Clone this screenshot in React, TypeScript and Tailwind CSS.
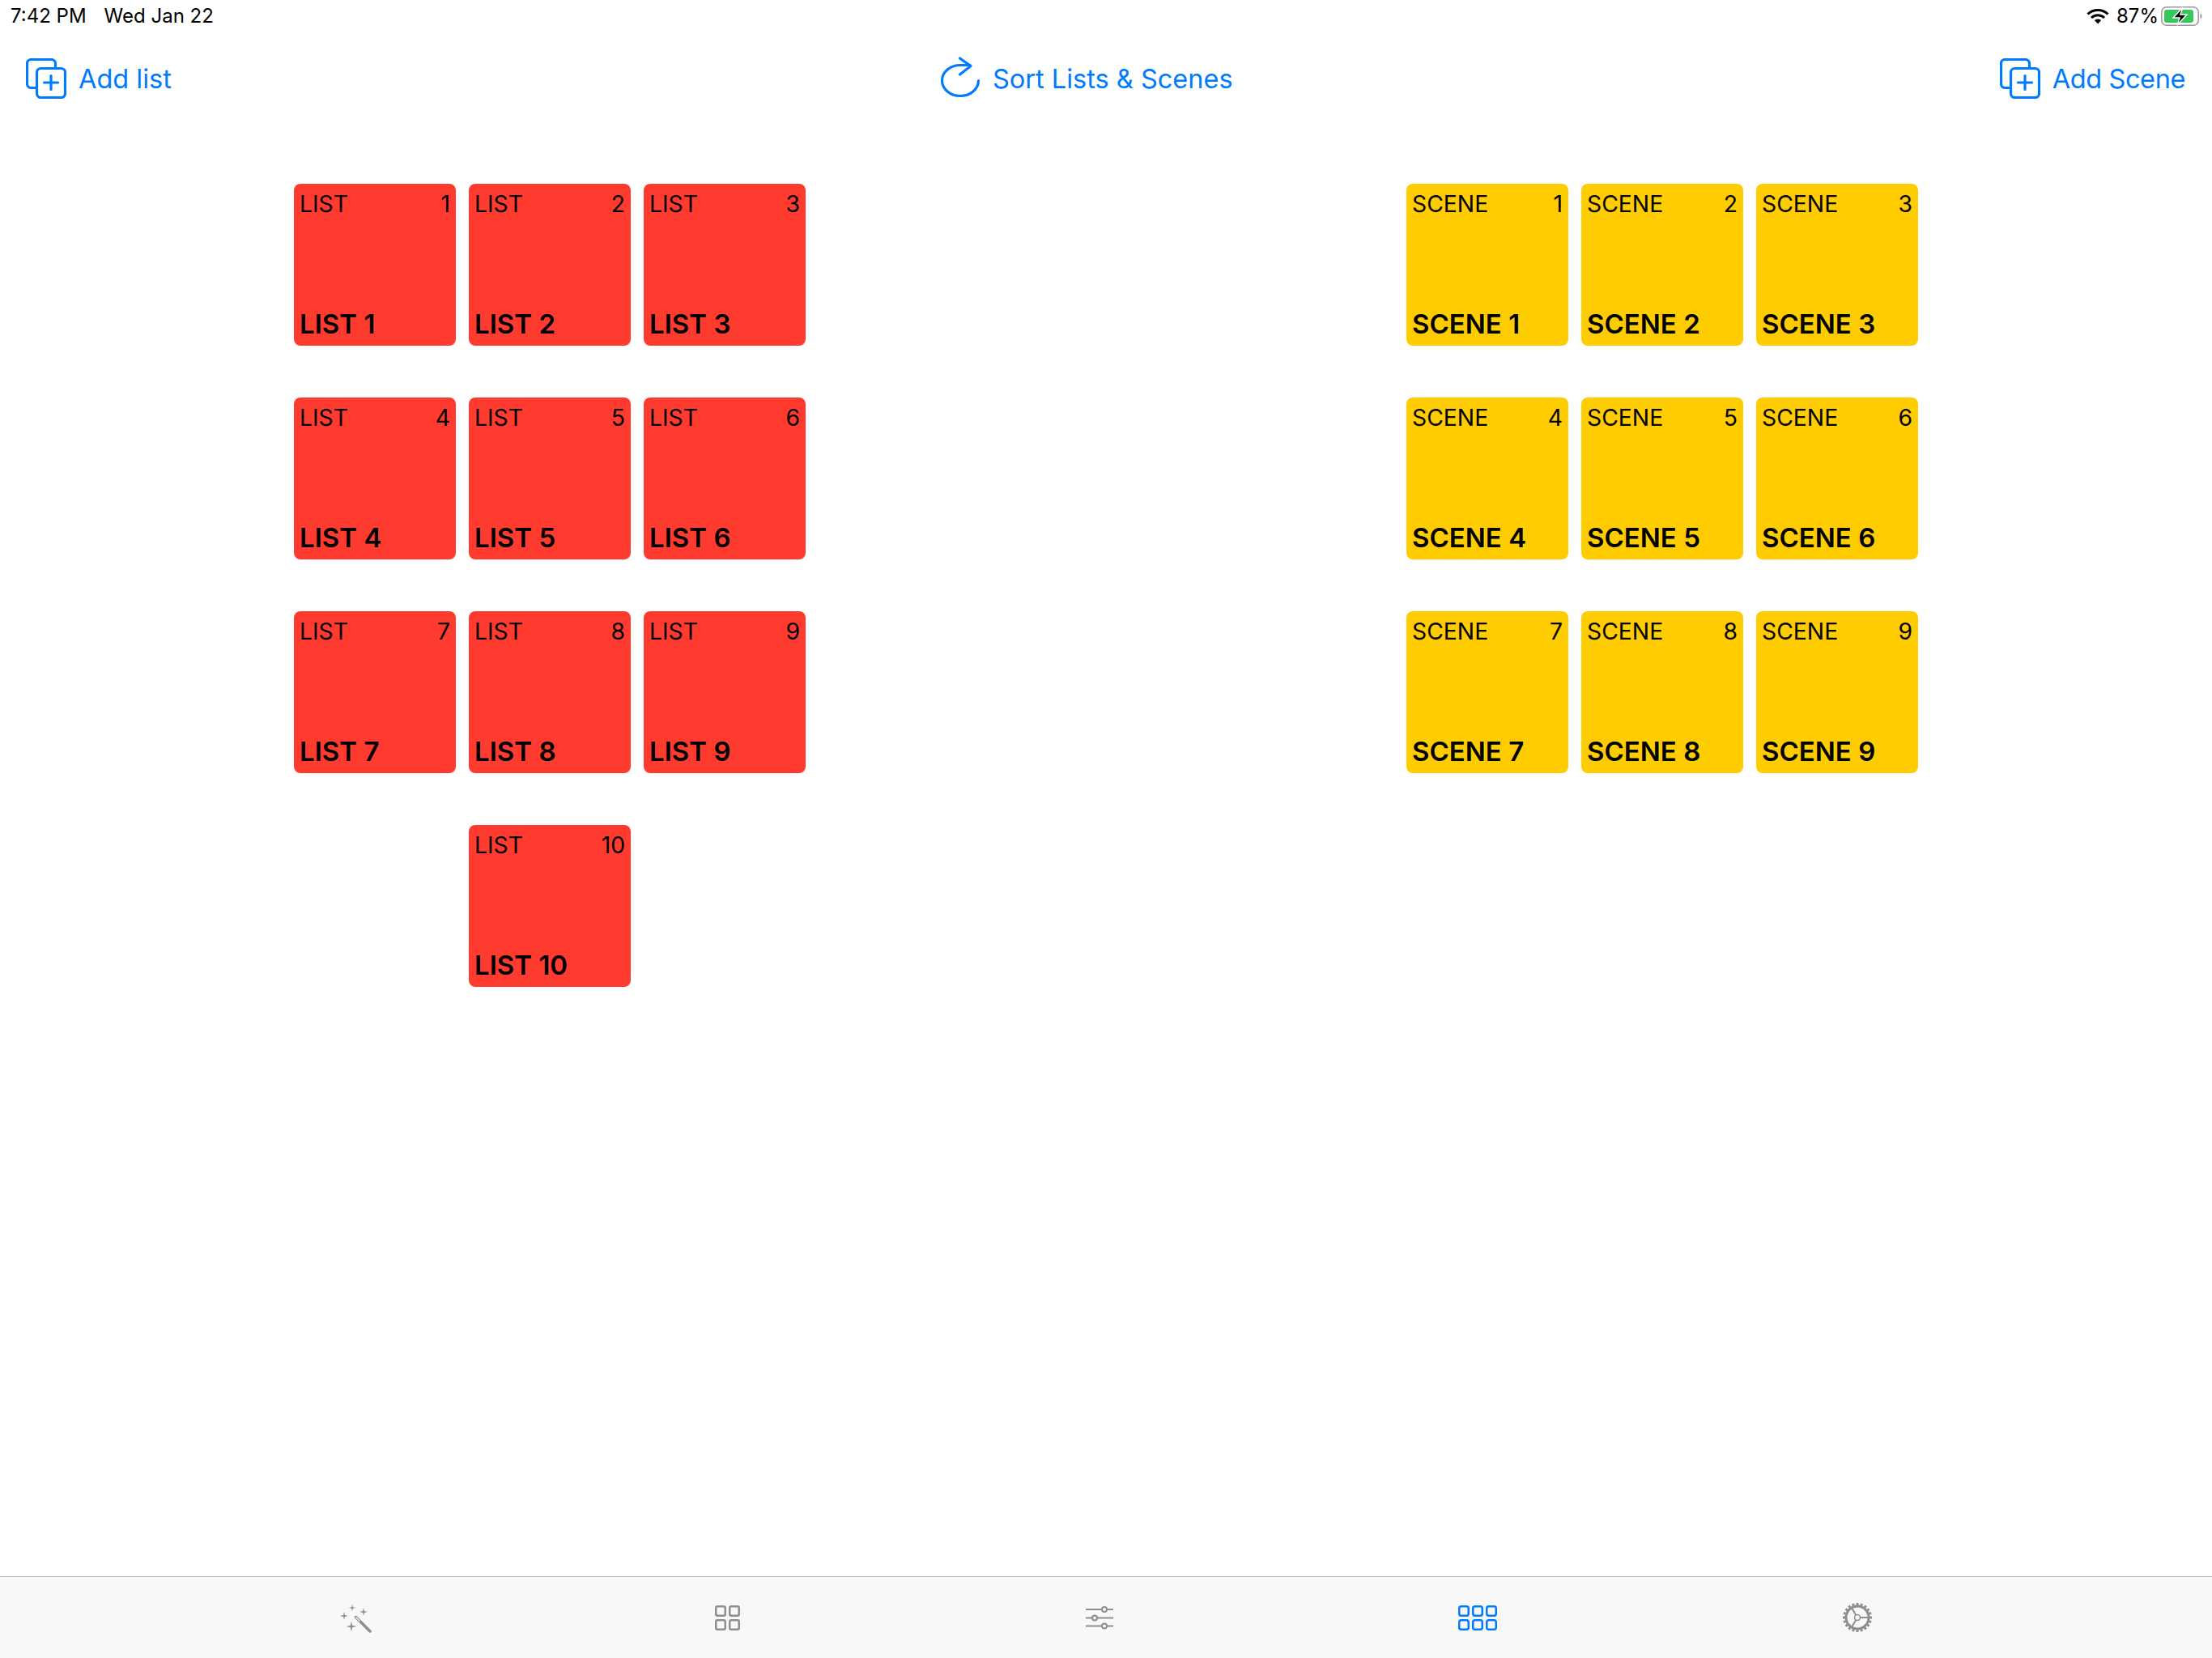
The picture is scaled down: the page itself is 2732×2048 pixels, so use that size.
import React from "react";

const BLUE = "#007aff";
const GRAY = "#8e8e93";

// Two overlapping squares with a plus, used by both add buttons
function AddIcon() {
    return (
        <svg width="50" height="50" viewBox="0 0 50 50" fill="none" stroke={BLUE} strokeWidth="3.2" strokeLinecap="round">
            <path d="M36.5 11V6.5a5 5 0 0 0-5-5H6.5a5 5 0 0 0-5 5v25a5 5 0 0 0 5 5H12" />
            <rect x="13.5" y="12.5" width="35" height="36" rx="5" />
            <path d="M31 21.5V38.5M22.5 30H39.5" />
        </svg>
    );
}

function SortIcon() {
    return (
        <svg width="52" height="56" viewBox="0 0 52 56" fill="none" stroke={BLUE} strokeWidth="3.2" strokeLinecap="round" strokeLinejoin="round">
            <path d="M49.5 30.5A22.5 19 0 0 1 4.5 30.5A22.5 19 0 0 1 27 11.5H39" />
            <path d="M26.5 3L40 12.5L26.5 23" />
        </svg>
    );
}

function Wifi() {
    return (
        <svg width="28" height="20" viewBox="0 0 28 20" fill="none" stroke="#000" strokeWidth="3">
            <path d="M1.5 7.5a18 18 0 0 1 25 0" />
            <path d="M6 12a11.5 11.5 0 0 1 16 0" />
            <path d="M14 19.5l-4.2-4.4a6 6 0 0 1 8.4 0z" fill="#000" stroke="none" />
        </svg>
    );
}

function Battery() {
    return (
        <svg width="53" height="24" viewBox="0 0 53 24">
            <rect x="0.75" y="0.75" width="45.5" height="22.5" rx="6" fill="none" stroke="#9a9a9a" strokeWidth="1.5" />
            <rect x="4" y="4" width="36" height="16" rx="3" fill="#34c759" />
            <path d="M48.5 8.5a4 4 0 0 1 0 7z" fill="#9a9a9a" />
            <path d="M27 1L15 14h8l-3 9L32 10h-8z" fill="#000" stroke="#fff" strokeWidth="1.5" />
        </svg>
    );
}

function WandIcon() {
    const sparkle = (x: number, y: number, r: number) => {
        const k = r * 0.18;
        return `M${x} ${y - r}L${x + k} ${y - k}L${x + r} ${y}L${x + k} ${y + k}L${x} ${y + r}L${x - k} ${y + k}L${x - r} ${y}L${x - k} ${y - k}Z`;
    };
    return (
        <svg width="40" height="40" viewBox="0 0 40 40" fill={GRAY}>
            <path d={sparkle(15, 31, 6.5)} />
            <path d={sparkle(6, 18, 5)} />
            <path d={sparkle(16, 8, 4.5)} />
            <path d={sparkle(30, 13, 5)} />
            <path d="M20.5 19.5L38 37" stroke={GRAY} strokeWidth="3.5" strokeLinecap="round" />
            <path d="M21 20L25 24" stroke="#f8f8f8" strokeWidth="1.2" strokeLinecap="round" />
        </svg>
    );
}

function GridFourIcon() {
    return (
        <svg width="31" height="31" viewBox="0 0 31 31" fill="none" stroke={GRAY} strokeWidth="2.5">
            <rect x="1.25" y="1.25" width="11.5" height="11.5" rx="2" />
            <rect x="18.25" y="1.25" width="11.5" height="11.5" rx="2" />
            <rect x="1.25" y="18.25" width="11.5" height="11.5" rx="2" />
            <rect x="18.25" y="18.25" width="11.5" height="11.5" rx="2" />
        </svg>
    );
}

function SlidersIcon() {
    return (
        <svg width="34" height="36" viewBox="0 0 34 36" fill="#f8f8f8" stroke={GRAY} strokeWidth="2">
            <path d="M0 8H34M0 18.5H34M0 28.5H34" />
            <circle cx="23" cy="8" r="3" strokeWidth="2" />
            <circle cx="11" cy="18.5" r="3" strokeWidth="2" />
            <circle cx="23" cy="28.5" r="3" strokeWidth="2" />
        </svg>
    );
}

function GridSixIcon() {
    const xs = [0, 17, 34];
    const ys = [0, 17];
    return (
        <svg width="48" height="31" viewBox="0 0 48 31" fill="none" stroke={BLUE} strokeWidth="2.5">
            {ys.map((y) => xs.map((x) => <rect key={`${x}-${y}`} x={x + 1.25} y={y + 1.25} width="11.5" height="11.5" rx="2.5" />))}
        </svg>
    );
}

function GearIcon() {
    const teeth = Array.from({ length: 20 }, (_, i) => i * 18);
    return (
        <svg width="38" height="38" viewBox="0 0 38 38" fill="none" stroke={GRAY}>
            <circle cx="19" cy="19" r="14" strokeWidth="3" />
            {teeth.map((deg) => (
                <path key={deg} d="M19 1V5" strokeWidth="3" transform={`rotate(${deg} 19 19)`} />
            ))}
            <circle cx="19" cy="19" r="3.5" strokeWidth="1.5" />
            <path d="M22.5 19H33M17.2 16L12 7M17.2 22L12 31" strokeWidth="2" />
        </svg>
    );
}

function ToolButton({ icon, label, tight }: { icon: React.ReactNode; label: string; tight?: boolean }) {
    return (
        <div className="flex items-center gap-[15px] text-[32.5px] text-[#007aff]">
            {icon}
            <span className={`mt-[3px] ${tight ? "tracking-[-0.4px]" : ""}`}>{label}</span>
        </div>
    );
}

function Tile({ kind, n, color, start }: { kind: string; n: number; color: string; start?: boolean }) {
    return (
        <div className={`${color} ${start ? "col-start-2" : ""} h-[200px] w-[200px] rounded-[8px] px-[7px] pt-[4px] pb-[2px] flex flex-col justify-between text-black`}>
            <div className="flex justify-between text-[28.3px]">
                <span>{kind}</span>
                <span>{n}</span>
            </div>
            <div className="text-[33px] font-semibold">{kind} {n}</div>
        </div>
    );
}

function App() {
    const lists = Array.from({ length: 10 }, (_, i) => i + 1);
    const scenes = Array.from({ length: 9 }, (_, i) => i + 1);

    return (
        <div className="w-[2732px] h-[2048px] bg-white flex flex-col overflow-hidden font-['Inter',sans-serif]">
            {/* Status bar */}
            <div className="h-[40px] pl-[13px] pr-[10px] flex items-center justify-between text-[24px] text-black">
                <div className="flex gap-[22px]">
                    <span>7:42 PM</span>
                    <span>Wed Jan 22</span>
                </div>
                <div className="flex items-center gap-[9px]">
                    <Wifi />
                    <div className="flex items-center gap-[3px]">
                        <span>87%</span>
                        <Battery />
                    </div>
                </div>
            </div>

            {/* Toolbar */}
            <div className="h-[114px] pl-[32px] pr-[33px] flex items-center justify-between">
                <ToolButton icon={<AddIcon />} label="Add list" />
                <ToolButton icon={<SortIcon />} label="Sort Lists & Scenes" />
                <ToolButton icon={<AddIcon />} label="Add Scene" tight />
            </div>

            {/* Lists and scenes */}
            <div className="flex-1 px-[363px] pt-[73px] flex justify-between items-start">
                <div className="grid grid-cols-3 gap-x-4 gap-y-16">
                    {lists.map((n) => (
                        <Tile key={n} kind="LIST" n={n} color="bg-[#ff3b30]" start={n === 10} />
                    ))}
                </div>
                <div className="grid grid-cols-3 gap-x-4 gap-y-16">
                    {scenes.map((n) => (
                        <Tile key={n} kind="SCENE" n={n} color="bg-[#ffcc00]" />
                    ))}
                </div>
            </div>

            {/* Tab bar */}
            <div className="h-[101px] border-t border-t-[#b2b2b2] bg-[#f8f8f8] pl-[209px] grid grid-cols-[460px_459px_460px_474px_464px] items-center justify-items-center">
                <WandIcon />
                <GridFourIcon />
                <SlidersIcon />
                <GridSixIcon />
                <GearIcon />
            </div>
        </div>
    );
}

export default App;
